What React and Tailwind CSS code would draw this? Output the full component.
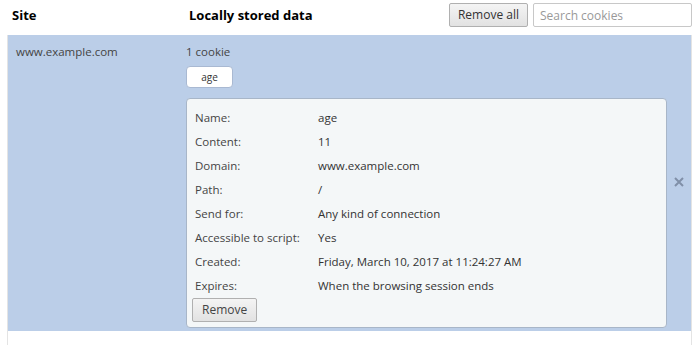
import React from 'react'

const details = [
    ['Name:', 'age'],
    ['Content:', '11'],
    ['Domain:', 'www.example.com'],
    ['Path:', '/'],
    ['Send for:', 'Any kind of connection'],
    ['Accessible to script:', 'Yes'],
    ['Created:', 'Friday, March 10, 2017 at 11:24:27 AM'],
    ['Expires:', 'When the browsing session ends'],
]

const App = () => {
    return (
        <div className="w-[699px] h-[345px] bg-white overflow-hidden text-[11.5px] text-[#333] font-['Open_Sans',sans-serif]">
            {/* Header */}
            <div className="h-[35px] flex items-start pt-[3px]">
                <div className="w-[189px] pl-[12px] leading-[24px] font-bold text-[13px] text-black">Site</div>
                <div className="flex-1 leading-[24px] font-bold text-[13px] text-black">Locally stored data</div>
                <button className="h-[24px] px-[8px] mr-[5px] border border-[#b0b0b0] rounded-[2px] bg-gradient-to-b from-[#f4f4f4] to-[#e2e2e2] text-[12px] text-[#333]">
                    Remove all
                </button>
                <input
                    className="w-[159px] h-[24px] mr-[7px] px-[6px] border border-[#c8c8c8] rounded-[2px] text-[12px] outline-none placeholder:text-[#999]"
                    placeholder="Search cookies"
                />
            </div>

            {/* List */}
            <div className="mx-[7px] h-[310px] border-x border-[#e4e4e4]">
                <div className="flex bg-[#bbcee8] pb-[3px]">
                    <div className="w-[178px] pl-[8px] pt-[8px] text-[#444]">www.example.com</div>
                    <div className="flex-1 pt-[8px]">
                        <div className="text-[#444]">1 cookie</div>
                        <button className="mt-[6px] w-[47px] h-[22px] rounded-[4px] bg-white border border-[#a9b9d2] text-[10px] text-[#333]">
                            age
                        </button>
                        <div className="mt-[10px] w-[481px] rounded-[4px] border border-[#a8b6c8] bg-[#f4f7f8] pl-[8px] pt-[6px] pb-[5px]">
                            {details.map(([k, v]) => (
                                <div key={k} className="flex h-[24px] items-center">
                                    <div className="w-[123px] text-[#444]">{k}</div>
                                    <div className="text-[#333]">{v}</div>
                                </div>
                            ))}
                            <button className="mt-[1px] ml-[-3px] h-[24px] px-[9px] border border-[#b0b0b0] rounded-[2px] bg-gradient-to-b from-[#f4f4f4] to-[#e2e2e2] text-[12px] text-[#444]">
                                Remove
                            </button>
                        </div>
                    </div>
                    <div className="w-[24px] flex items-center justify-center">
                        <svg width="10" height="10" viewBox="0 0 10 10">
                            <path d="M1 1 L9 9 M9 1 L1 9" stroke="#8090a8" strokeWidth="2" />
                        </svg>
                    </div>
                </div>
            </div>
        </div>
    )
}

export default App
